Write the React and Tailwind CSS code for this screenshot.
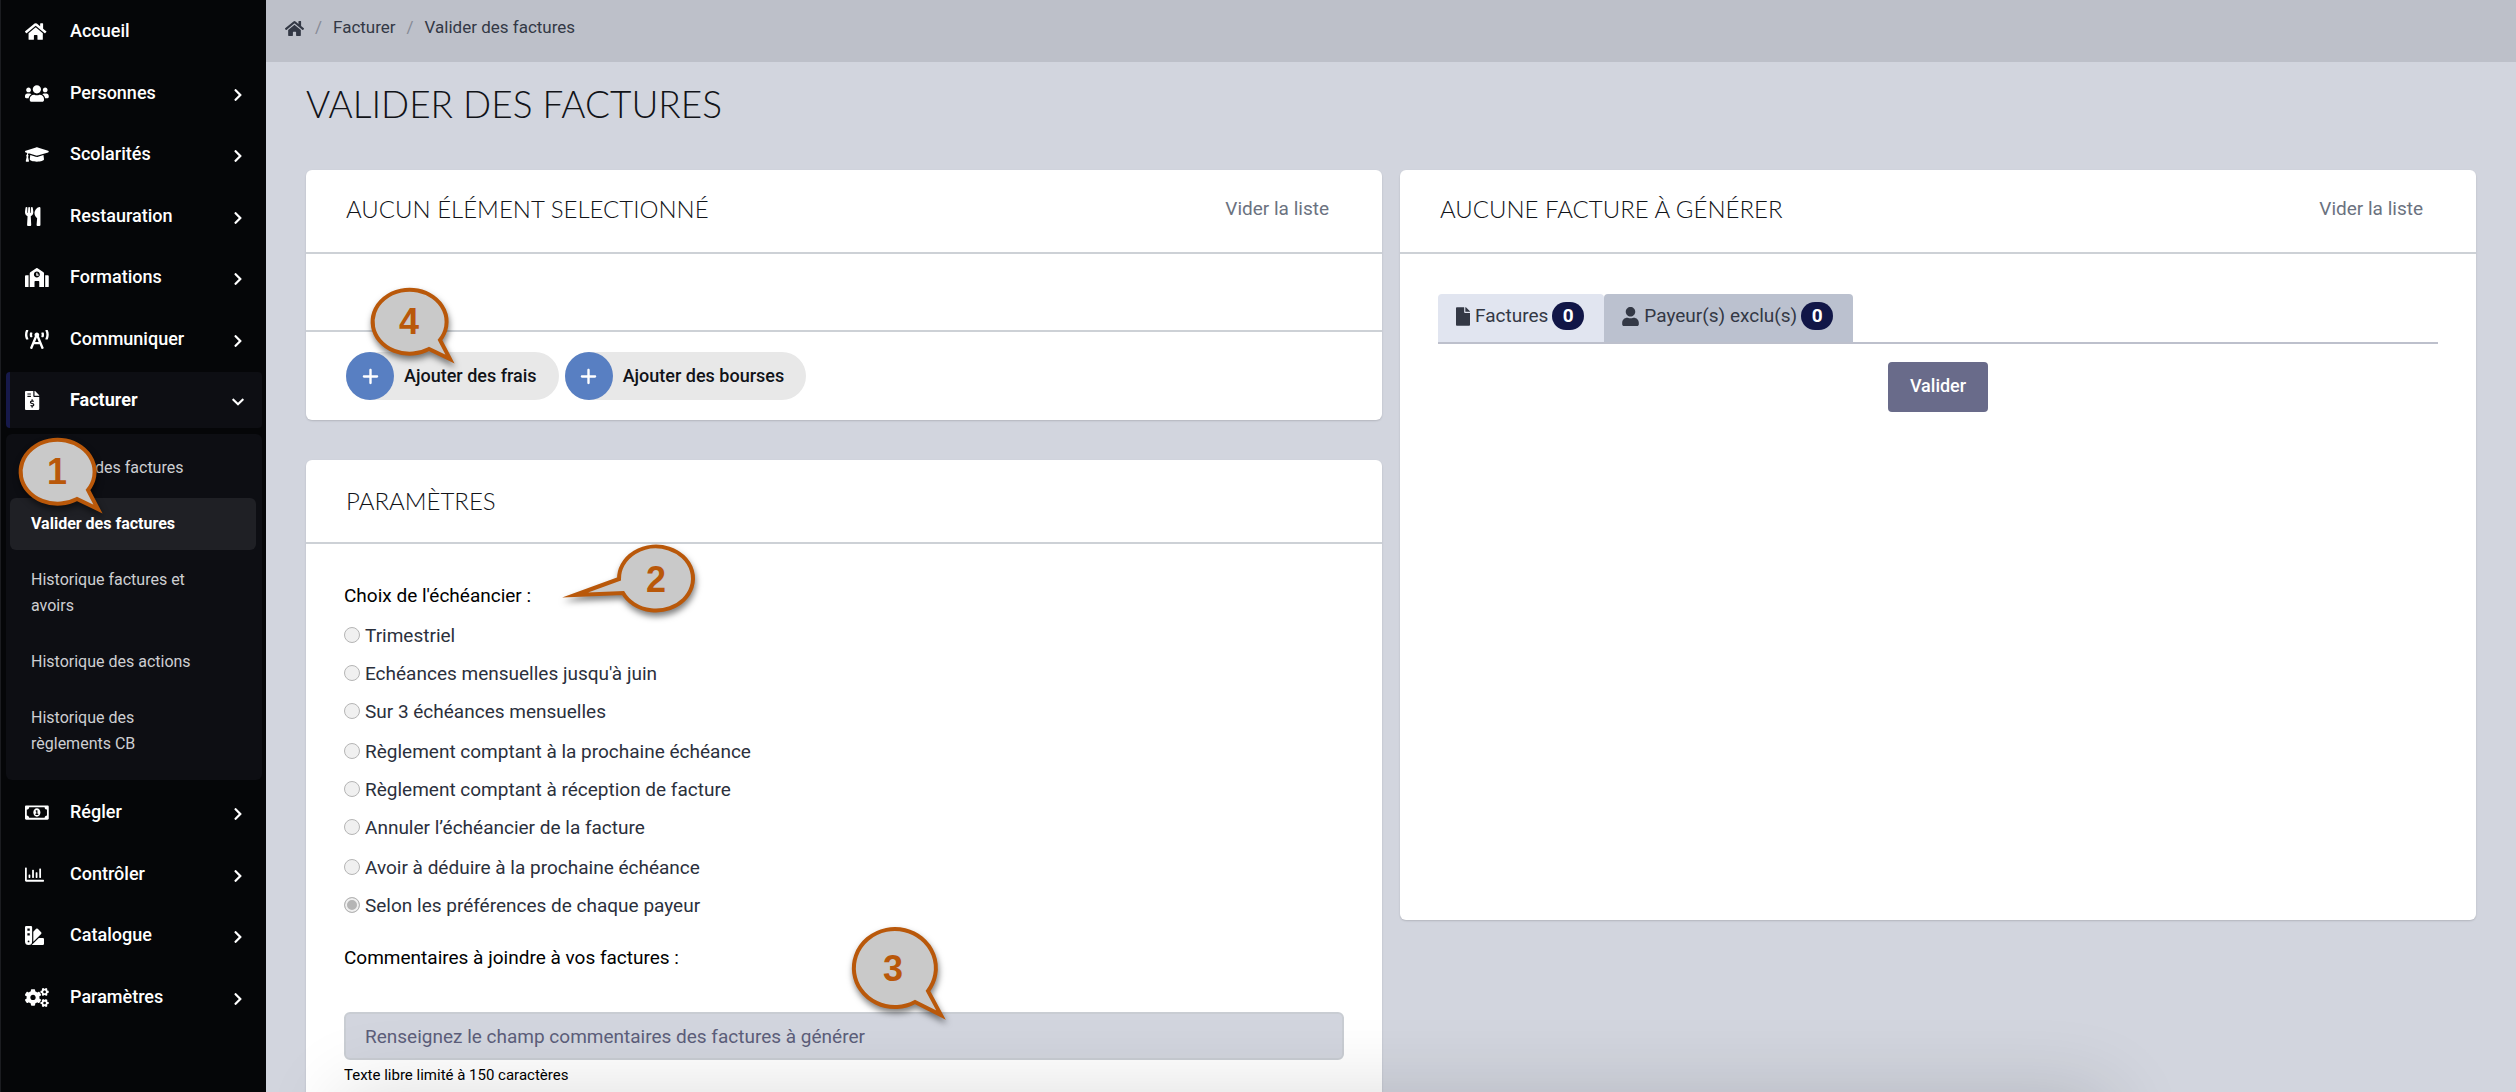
// File: App.jsx
// Description: Invoice validation page (sidebar, selection, parameters, invoices to generate).

import {
    FaBroadcastTower,
    FaChevronDown,
    FaChevronRight,
    FaCogs,
    FaFile,
    FaFileInvoiceDollar,
    FaGraduationCap,
    FaHome,
    FaRegChartBar,
    FaRegMoneyBillAlt,
    FaSchool,
    FaSwatchbook,
    FaUser,
    FaUsers,
    FaUtensils,
} from 'react-icons/fa';
import { FaPlus } from 'react-icons/fa6';

const topMenu = [
    { label: 'Accueil', icon: FaHome, leaf: true },
    { label: 'Personnes', icon: FaUsers },
    { label: 'Scolarités', icon: FaGraduationCap },
    { label: 'Restauration', icon: FaUtensils },
    { label: 'Formations', icon: FaSchool },
    { label: 'Communiquer', icon: FaBroadcastTower },
    { label: 'Facturer', icon: FaFileInvoiceDollar, open: true },
];

const subMenu = [
    { label: 'des factures', indent: true },
    { label: 'Valider des factures', active: true },
    { label: 'Historique factures et avoirs' },
    { label: 'Historique des actions' },
    { label: 'Historique des règlements CB' },
];

const bottomMenu = [
    { label: 'Régler', icon: FaRegMoneyBillAlt },
    { label: 'Contrôler', icon: FaRegChartBar },
    { label: 'Catalogue', icon: FaSwatchbook },
    { label: 'Paramètres', icon: FaCogs },
];

const schedules = [
    'Trimestriel',
    "Echéances mensuelles jusqu'à juin",
    'Sur 3 échéances mensuelles',
    'Règlement comptant à la prochaine échéance',
    'Règlement comptant à réception de facture',
    'Annuler l’échéancier de la facture',
    'Avoir à déduire à la prochaine échéance',
    'Selon les préférences de chaque payeur',
];

// Speech bubble outlines, one for each direction of the tail
const bubbleShapes = {
    right: 'M70 52 A37 32 0 1 0 59 61 L80 71 Z',
    left: 'M2 33 A37 32 0 1 1 6 47 L-42 49 Z',
    big: 'M78 63 A41 39 0 1 0 65 74 L91 87 Z',
};

const Bubble = ({ number, shape = 'right', className }) => (
    <div className={`pointer-events-none absolute z-10 flex items-center justify-center ${className}`}>
        <svg className="absolute inset-0 h-full w-full overflow-visible drop-shadow-[1px_4px_3px_rgba(0,0,0,0.5)]">
            <path d={bubbleShapes[shape]} fill="#c9c9c9" stroke="#b9580a" strokeWidth="4" strokeMiterlimit="10" />
        </svg>
        <span className="relative font-['Liberation_Sans',sans-serif] text-[36px] leading-none font-bold text-[#b9580a]">{number}</span>
    </div>
);

const MenuItem = ({ item }) => {
    const Icon = item.icon;
    const Chevron = item.open ? FaChevronDown : FaChevronRight;
    return (
        <li className="odd:mb-1.5 even:mb-[5px]">
            <a
                href="#"
                className={`mr-1 ml-[5px] flex h-14 items-center rounded border-l-4 pr-4 pl-[15px] text-lg ${
                    item.open ? 'border-[#16194a] bg-[#0d0e13] font-bold' : 'border-transparent font-medium'
                }`}
            >
                <span className="w-[45px]">
                    <Icon className="h-[19px] w-6" preserveAspectRatio="xMinYMid meet" />
                </span>
                <span className="flex-1">{item.label}</span>
                {!item.leaf && (
                    <span className="flex w-4 justify-center pt-1">
                        <Chevron className="h-[14px] w-3" />
                    </span>
                )}
            </a>
        </li>
    );
};

const Sidebar = () => (
    <nav className="relative w-[266px] shrink-0 border-l border-[#1b1c20] bg-[#050608] pt-[3px] text-white">
        <ul>
            {topMenu.map((item) => <MenuItem key={item.label} item={item} />)}
        </ul>
        <div className="relative mr-1 mb-1 ml-[5px] rounded-md bg-[#0d0e13] pt-2 pr-1.5 pb-2.5 pl-1">
            <ul className="space-y-1">
                {subMenu.map((item) => (
                    <li key={item.label}>
                        <a
                            href="#"
                            className={`block rounded-md py-[13px] text-base leading-[26px] ${item.indent ? 'pl-[85px]' : 'pr-10 pl-[21px]'} ${
                                item.active ? 'bg-[#1f2025] font-bold whitespace-nowrap' : 'text-[#cdced2]'
                            }`}
                        >
                            {item.label}
                        </a>
                    </li>
                ))}
            </ul>
            <Bubble number="1" className="top-1 left-3 h-[68px] w-[78px]" />
        </div>
        <ul>
            {bottomMenu.map((item) => <MenuItem key={item.label} item={item} />)}
        </ul>
    </nav>
);

const Card = ({ title, action, className = '', children }) => (
    <section className={`rounded-md bg-white shadow-[0_1px_2px_rgba(0,0,0,0.15)] ${className}`}>
        <header className={`flex h-[84px] items-center justify-between border-b-2 border-[#cdd1d6] pr-[53px] pl-10 ${action ? 'pb-1' : ''}`}>
            <h2 className="font-['Lato',sans-serif] text-2xl font-light text-[#111318]">{title}</h2>
            {action && <a href="#" className="text-[19px] text-[#6b7280]">{action}</a>}
        </header>
        {children}
    </section>
);

const AddButton = ({ label }) => (
    <button type="button" className="flex h-12 items-center rounded-full bg-[#e8e8e8] pr-[22px] text-lg font-medium text-[#111318]">
        <span className="mr-2.5 flex h-12 w-12 items-center justify-center rounded-full bg-[#587fc2] text-white">
            <FaPlus className="h-[19px] w-[17px]" />
        </span>
        {label}
    </button>
);

const Tab = ({ icon: Icon, iconWidth, label, count, selected }) => (
    <button
        type="button"
        role="tab"
        aria-selected={selected}
        className={`flex h-12 items-center rounded-t pr-5 pb-1 pl-[18px] text-[19px] text-[#333845] ${selected ? 'bg-[#e1e5f0]' : 'bg-[#bbc1cf]'}`}
    >
        <Icon className={`mr-[5px] h-[19px] ${iconWidth}`} />
        {label}
        <span className="ml-1 flex h-7 w-8 items-center justify-center rounded-full bg-[#111647] font-bold text-white">{count}</span>
    </button>
);

const App = () => {
    return (
        <div className="relative flex h-screen overflow-hidden bg-[#d2d5de] font-['Roboto',sans-serif]">
            <Sidebar />

            <div className="min-w-0 flex-1">
                {/* Breadcrumb */}
                <nav className="flex h-[62px] items-center gap-[11px] bg-[#bdc0c9] pb-1.5 pl-[19px] text-[17px] text-[#333845]">
                    <a href="#" aria-label="Accueil"><FaHome className="h-[17px] w-[19px]" /></a>
                    <span className="text-[#868a96]">/</span>
                    <a href="#">Facturer</a>
                    <span className="text-[#868a96]">/</span>
                    <span>Valider des factures</span>
                </nav>

                <main className="px-10">
                    <h1 className="flex h-[108px] items-center pb-6 font-['Lato',sans-serif] text-[37px] font-light text-[#111318]">
                        VALIDER DES FACTURES
                    </h1>

                    <div className="grid grid-cols-2 items-start gap-[18px]">
                        <div className="space-y-10">
                            <Card title="AUCUN ÉLÉMENT SELECTIONNÉ" action="Vider la liste">
                                <div className="h-[78px] border-b-2 border-[#cdd1d6]" />
                                <div className="relative flex gap-1.5 px-10 py-5">
                                    <AddButton label="Ajouter des frais" />
                                    <AddButton label="Ajouter des bourses" />
                                    <Bubble number="4" className="-top-11 left-16 h-[68px] w-[78px]" />
                                </div>
                            </Card>

                            {/* Parameters */}
                            <Card title="PARAMÈTRES">
                                <form className="relative px-[38px] pt-[38px] text-[19px] text-[#2b303c]">
                                    <fieldset disabled>
                                        <legend className="mb-1.5 leading-7 text-black">Choix de l'échéancier :</legend>
                                        {schedules.map((label, i) => (
                                            <label key={label} className="flex h-[38px] items-center gap-[5px] nth-[3n+1]:mb-0.5">
                                                <input
                                                    type="radio"
                                                    name="schedule"
                                                    defaultChecked={i === schedules.length - 1}
                                                    className="size-4 appearance-none rounded-full border border-[#b5b5b5] bg-[#f0f0f0] checked:bg-[#b5b5b5] checked:shadow-[inset_0_0_0_2px_#f0f0f0]"
                                                />
                                                <span className="pt-0.5">{label}</span>
                                            </label>
                                        ))}
                                    </fieldset>
                                    <label htmlFor="comments" className="mt-5 block leading-7 text-black">
                                        Commentaires à joindre à vos factures :
                                    </label>
                                    <input
                                        id="comments"
                                        type="text"
                                        maxLength={150}
                                        placeholder="Renseignez le champ commentaires des factures à générer"
                                        className="mt-10 block h-12 w-full rounded-md border-2 border-[#c9cdd3] bg-[#d2d5de] px-[19px] placeholder:text-[#5c5e7a]"
                                    />
                                    <p className="mt-1 pb-10 text-[15px] text-black">Texte libre limité à 150 caractères</p>
                                    <Bubble number="2" shape="left" className="top-0.5 left-[311px] h-[68px] w-[78px]" />
                                    <Bubble number="3" shape="big" className="top-96 left-[544px] h-[82px] w-[86px]" />
                                </form>
                            </Card>
                        </div>

                        {/* Invoices to generate */}
                        <Card title="AUCUNE FACTURE À GÉNÉRER" action="Vider la liste" className="min-h-[750px]">
                            <div className="px-[38px] pt-10">
                                <div role="tablist" className="flex border-b-2 border-[#bdc0cc]">
                                    <Tab icon={FaFile} iconWidth="w-[14px]" label="Factures" count={0} selected />
                                    <Tab icon={FaUser} iconWidth="w-[17px]" label="Payeur(s) exclu(s)" count={0} selected={false} />
                                </div>
                                <button type="button" className="mx-auto mt-[18px] block h-[50px] w-[100px] rounded bg-[#696b8a] pb-0.5 text-lg font-medium text-white">
                                    Valider
                                </button>
                            </div>
                        </Card>
                    </div>
                </main>
            </div>

            {/* Soft shade along the bottom edge */}
            <div className="pointer-events-none absolute top-full right-[406px] left-[340px] h-40 shadow-[0_0_80px_rgba(0,0,0,0.14)]" />
        </div>
    );
};

export default App;
